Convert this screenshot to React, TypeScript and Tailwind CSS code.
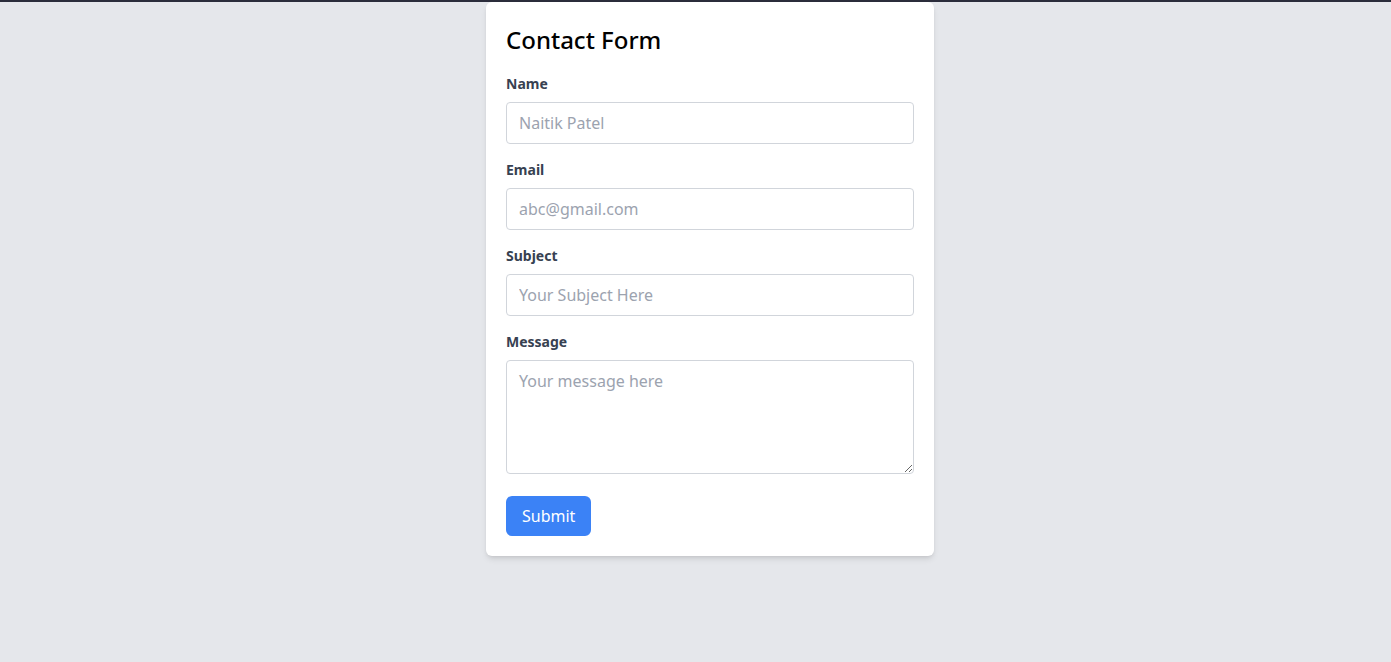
export default function App() {
  return (
    <div
      className="min-h-[662px] bg-[#e5e7eb] border-t-2 border-[#2b2d3b] pl-[29px]"
      style={{ fontFamily: '"Noto Sans", "Open Sans", sans-serif' }}
    >
      <div className="w-[448px] mx-auto bg-white rounded-md shadow-md p-5">
        <h2 className="text-2xl font-medium text-black mb-4 leading-9">Contact Form</h2>
        <form onSubmit={(e) => e.preventDefault()}>
          <div className="mb-4">
            <label className="block text-sm font-bold text-[#374151] mb-2">Name</label>
            <input
              type="text"
              placeholder="Naitik Patel"
              className="w-full h-[42px] px-3 border border-[#d1d5db] rounded text-base placeholder:text-[#9ca3af] outline-none"
            />
          </div>
          <div className="mb-4">
            <label className="block text-sm font-bold text-[#374151] mb-2">Email</label>
            <input
              type="email"
              placeholder="abc@gmail.com"
              className="w-full h-[42px] px-3 border border-[#d1d5db] rounded text-base placeholder:text-[#9ca3af] outline-none"
            />
          </div>
          <div className="mb-4">
            <label className="block text-sm font-bold text-[#374151] mb-2">Subject</label>
            <input
              type="text"
              placeholder="Your Subject Here"
              className="w-full h-[42px] px-3 border border-[#d1d5db] rounded text-base placeholder:text-[#9ca3af] outline-none"
            />
          </div>
          <div className="mb-4">
            <label className="block text-sm font-bold text-[#374151] mb-2">Message</label>
            <textarea
              placeholder="Your message here"
              rows={4}
              className="w-full h-[114px] px-3 py-2 border border-[#d1d5db] rounded text-base placeholder:text-[#9ca3af] outline-none align-bottom"
            />
          </div>
          <button
            type="submit"
            className="mt-[6px] bg-[#3b82f6] text-white text-base px-4 h-10 rounded-md"
          >
            Submit
          </button>
        </form>
      </div>
    </div>
  );
}
